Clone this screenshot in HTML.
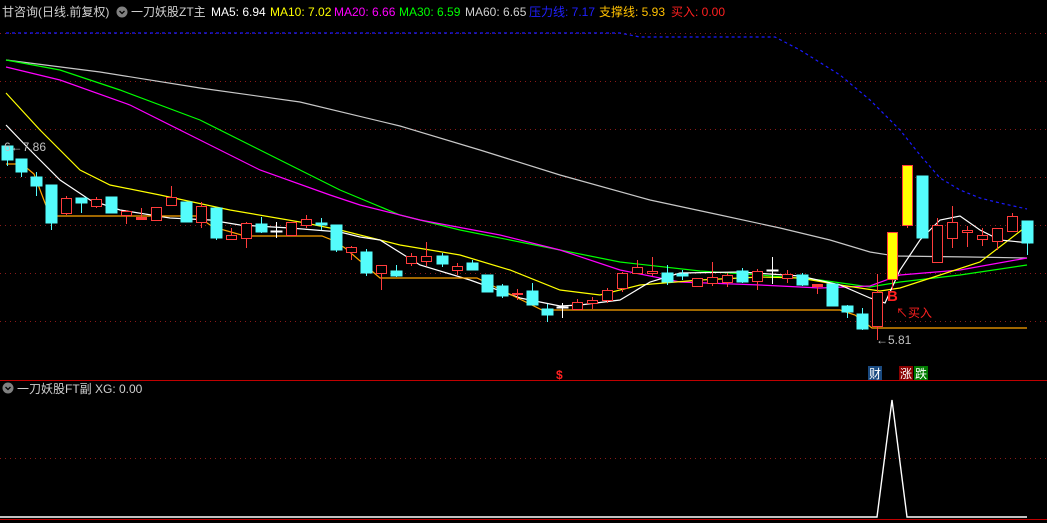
<!DOCTYPE html>
<html><head><meta charset="utf-8"><style>
html,body{margin:0;padding:0;background:#000;width:1047px;height:523px;overflow:hidden}
svg{display:block}
text{font-family:"Liberation Sans","Noto Sans CJK SC",sans-serif;font-size:12px}
</style></head><body>
<svg width="1047" height="523" viewBox="0 0 1047 523" xmlns="http://www.w3.org/2000/svg">
<rect width="1047" height="523" fill="#000"/>
<g stroke="#8a1a1a" stroke-width="1" stroke-dasharray="1,4">
<line x1="0" y1="33.5" x2="1047" y2="33.5"/><line x1="0" y1="81.5" x2="1047" y2="81.5"/>
<line x1="0" y1="129.5" x2="1047" y2="129.5"/><line x1="0" y1="177.5" x2="1047" y2="177.5"/>
<line x1="0" y1="225.5" x2="1047" y2="225.5"/><line x1="0" y1="273.5" x2="1047" y2="273.5"/>
<line x1="0" y1="321.5" x2="1047" y2="321.5"/><line x1="0" y1="458.5" x2="1047" y2="458.5"/>
</g>
<line x1="0" y1="380.5" x2="1047" y2="380.5" stroke="#c00000"/>
<line x1="0" y1="519.5" x2="1047" y2="519.5" stroke="#c00000"/>
<!-- resistance -->
<polyline fill="none" stroke="#1a1aff" stroke-width="1.2" stroke-dasharray="3,3" points="6,33 620,33 640,37 775,37 800,50 840,75 870,100 900,130 920,155 940,178 960,190 980,198 1000,203 1027,209"/>
<!-- MA60 -->
<polyline fill="none" stroke="#c8c8c8" stroke-width="1.2" points="6,60 100,72 200,88 300,102 400,126 480,150 560,175 650,200 720,215 780,228 830,240 870,252 895,256 970,257 1027,258"/>
<!-- MA30 -->
<polyline fill="none" stroke="#00ff00" stroke-width="1.2" points="6,60 60,70 120,90 200,120 280,160 340,190 400,215 460,230 560,250 620,262 700,271 760,275 820,280 870,287 900,282 960,275 1027,265"/>
<!-- MA20 -->
<polyline fill="none" stroke="#ff00ff" stroke-width="1.2" points="6,67 60,80 130,105 200,140 260,170 330,195 360,205 420,220 500,235 560,250 620,270 680,282 760,285 820,288 870,286 900,275 960,270 1027,258"/>
<!-- MA10 -->
<polyline fill="none" stroke="#ffff00" stroke-width="1.2" points="6,93 40,130 80,170 110,185 160,195 230,210 300,222 340,230 400,245 460,255 510,270 560,290 600,295 640,285 700,280 760,277 800,278 840,285 880,291 900,288 940,275 980,262 1027,226"/>
<!-- MA5 -->
<polyline fill="none" stroke="#ffffff" stroke-width="1.2" points="6,125 30,150 60,180 90,200 120,210 170,218 210,220 240,225 290,228 340,232 360,237 380,240 420,265 470,280 520,298 560,306 580,305 620,300 650,282 680,273 740,272 800,276 840,285 870,298 885,303 900,270 920,240 940,220 960,216 980,230 1000,240 1030,243"/>
<!-- support -->
<polyline fill="none" stroke="#ffa500" stroke-width="1.2" points="6,164 22,164 34,174 50,216 197,216 213,227 245,236 322,236 332,240 345,248 380,278 477,278 542,310 840,310 855,315 872,328 1027,328"/>
<g stroke-width="1">
<g stroke="#54fcfc" fill="#54fcfc">
<line x1="7.5" y1="146" x2="7.5" y2="166"/><rect x="2" y="146" width="11" height="14"/>
<line x1="21.5" y1="159" x2="21.5" y2="177"/><rect x="16" y="159" width="11" height="13"/>
<line x1="36.5" y1="172" x2="36.5" y2="196"/><rect x="31" y="177" width="11" height="9"/>
<line x1="51.5" y1="185" x2="51.5" y2="230"/><rect x="46" y="185" width="11" height="38"/>
<line x1="81.5" y1="198" x2="81.5" y2="213"/><rect x="76" y="198" width="11" height="5"/>
<rect x="106" y="197" width="11" height="16"/>
<rect x="181" y="202" width="11" height="20"/>
<line x1="216.5" y1="208" x2="216.5" y2="240"/><rect x="211" y="208" width="11" height="30"/>
<line x1="261.5" y1="217" x2="261.5" y2="233"/><rect x="256" y="224" width="11" height="8"/>
<line x1="321.5" y1="218" x2="321.5" y2="230"/><rect x="316" y="223" width="11" height="2"/>
<line x1="336.5" y1="225" x2="336.5" y2="252"/><rect x="331" y="225" width="11" height="25"/>
<line x1="366.5" y1="249" x2="366.5" y2="276"/><rect x="361" y="252" width="11" height="21"/>
<line x1="396.5" y1="265" x2="396.5" y2="277"/><rect x="391" y="271" width="11" height="5"/>
<line x1="442.5" y1="253" x2="442.5" y2="267"/><rect x="437" y="256" width="11" height="8"/>
<line x1="472.5" y1="260" x2="472.5" y2="270"/><rect x="467" y="263" width="11" height="7"/>
<rect x="482" y="275" width="11" height="17"/>
<line x1="502.5" y1="284" x2="502.5" y2="298"/><rect x="497" y="286" width="11" height="10"/>
<line x1="532.5" y1="283" x2="532.5" y2="305"/><rect x="527" y="291" width="11" height="14"/>
<line x1="547.5" y1="304" x2="547.5" y2="322"/><rect x="542" y="309" width="11" height="6"/>
<line x1="667.5" y1="265" x2="667.5" y2="285"/><rect x="662" y="273" width="11" height="9"/>
<line x1="682.5" y1="270" x2="682.5" y2="280"/><rect x="677" y="274" width="11" height="2"/>
<line x1="742.5" y1="268" x2="742.5" y2="283"/><rect x="737" y="271" width="11" height="11"/>
<line x1="802.5" y1="273" x2="802.5" y2="286"/><rect x="797" y="275" width="11" height="10"/>
<rect x="827" y="284" width="11" height="22"/>
<line x1="847.5" y1="305" x2="847.5" y2="318"/><rect x="842" y="306" width="11" height="6"/>
<line x1="862.5" y1="308" x2="862.5" y2="330"/><rect x="857" y="314" width="11" height="15"/>
<rect x="917" y="176" width="11" height="62"/>
<line x1="1027.5" y1="221" x2="1027.5" y2="255"/><rect x="1022" y="221" width="11" height="22"/>
</g>
<g stroke="#fff" fill="#fff">
<line x1="276.5" y1="222" x2="276.5" y2="238"/><rect x="271" y="231" width="11" height="1"/>
<line x1="562.5" y1="303" x2="562.5" y2="318"/><rect x="557" y="307" width="11" height="1"/>
<line x1="772.5" y1="257" x2="772.5" y2="284"/><rect x="767" y="270" width="11" height="1"/>
</g>
<g stroke="#ff3c3c" fill="#000">
<line x1="66.5" y1="196" x2="66.5" y2="215"/><rect x="61.5" y="198.5" width="10" height="15"/>
<line x1="96.5" y1="197" x2="96.5" y2="208"/><rect x="91.5" y="199.5" width="10" height="7"/>
<line x1="126.5" y1="210" x2="126.5" y2="224"/><rect x="121.5" y="211.5" width="10" height="4"/>
<line x1="141.5" y1="208" x2="141.5" y2="220"/><rect x="136.5" y="217.5" width="10" height="2" fill="#ff3c3c"/>
<rect x="151.5" y="207.5" width="10" height="13"/>
<line x1="171.5" y1="186" x2="171.5" y2="205"/><rect x="166.5" y="197.5" width="10" height="8"/>
<line x1="201.5" y1="202" x2="201.5" y2="228"/><rect x="196.5" y="206.5" width="10" height="16"/>
<line x1="231.5" y1="228" x2="231.5" y2="240"/><rect x="226.5" y="235.5" width="10" height="4"/>
<line x1="246.5" y1="222" x2="246.5" y2="248"/><rect x="241.5" y="223.5" width="10" height="15"/>
<rect x="286.5" y="222.5" width="10" height="13"/>
<line x1="306.5" y1="215" x2="306.5" y2="228"/><rect x="301.5" y="219.5" width="10" height="6"/>
<line x1="351.5" y1="246" x2="351.5" y2="260"/><rect x="346.5" y="247.5" width="10" height="5"/>
<line x1="381.5" y1="265" x2="381.5" y2="290"/><rect x="376.5" y="265.5" width="10" height="8"/>
<line x1="411.5" y1="253" x2="411.5" y2="266"/><rect x="406.5" y="256.5" width="10" height="7"/>
<line x1="426.5" y1="242" x2="426.5" y2="266"/><rect x="421.5" y="256.5" width="10" height="5"/>
<line x1="457.5" y1="263" x2="457.5" y2="275"/><rect x="452.5" y="266.5" width="10" height="4"/>
<line x1="517.5" y1="289" x2="517.5" y2="300"/><rect x="512.5" y="293.5" width="10" height="1" fill="#ff3c3c"/>
<line x1="577.5" y1="299" x2="577.5" y2="309"/><rect x="572.5" y="302.5" width="10" height="7"/>
<line x1="592.5" y1="297" x2="592.5" y2="309"/><rect x="587.5" y="300.5" width="10" height="3"/>
<line x1="607.5" y1="288" x2="607.5" y2="303"/><rect x="602.5" y="290.5" width="10" height="10"/>
<line x1="622.5" y1="272" x2="622.5" y2="292"/><rect x="617.5" y="273.5" width="10" height="15"/>
<line x1="637.5" y1="260" x2="637.5" y2="274"/><rect x="632.5" y="267.5" width="10" height="6"/>
<line x1="652.5" y1="257" x2="652.5" y2="276"/><rect x="647.5" y="271.5" width="10" height="2"/>
<rect x="692.5" y="278.5" width="10" height="8"/>
<line x1="712.5" y1="262" x2="712.5" y2="286"/><rect x="707.5" y="277.5" width="10" height="6"/>
<line x1="727.5" y1="273" x2="727.5" y2="287"/><rect x="722.5" y="275.5" width="10" height="7"/>
<line x1="757.5" y1="269" x2="757.5" y2="290"/><rect x="752.5" y="271.5" width="10" height="10"/>
<line x1="787.5" y1="270" x2="787.5" y2="283"/><rect x="782.5" y="274.5" width="10" height="4"/>
<line x1="817.5" y1="284" x2="817.5" y2="294"/><rect x="812.5" y="284.5" width="10" height="2" fill="#ff3c3c"/>
<line x1="877.5" y1="274" x2="877.5" y2="340"/><rect x="872.5" y="292.5" width="10" height="34"/>
<line x1="937.5" y1="218" x2="937.5" y2="262"/><rect x="932.5" y="225.5" width="10" height="37"/>
<line x1="952.5" y1="206" x2="952.5" y2="248"/><rect x="947.5" y="222.5" width="10" height="16"/>
<line x1="967.5" y1="226" x2="967.5" y2="247"/><rect x="962.5" y="230.5" width="10" height="2"/>
<line x1="982.5" y1="228" x2="982.5" y2="246"/><rect x="977.5" y="235.5" width="10" height="4"/>
<line x1="997.5" y1="228" x2="997.5" y2="250"/><rect x="992.5" y="228.5" width="10" height="13"/>
<line x1="1012.5" y1="213" x2="1012.5" y2="231"/><rect x="1007.5" y="216.5" width="10" height="15"/>
</g>
<g stroke="#ff3c3c" fill="#ffff00">
<line x1="892.5" y1="279" x2="892.5" y2="290"/><rect x="887.5" y="232.5" width="10" height="47"/>
<line x1="907.5" y1="225" x2="907.5" y2="228"/><rect x="902.5" y="165.5" width="10" height="60"/>
</g>
</g>
<!-- annotations -->
<text x="4" y="151" fill="#c0c0c0">6←7.86</text>
<text x="876" y="344" fill="#c0c0c0">←5.81</text>
<text x="887" y="301" fill="#ff2020" font-weight="bold" style="font-size:15px">B</text>
<text x="896" y="317" fill="#ff2020">↖买入</text>
<text x="556" y="379" fill="#ff2020" font-weight="bold">$</text>
<rect x="868" y="366" width="14" height="14" fill="#1a4a80"/><text x="869" y="378" fill="#fff">财</text>
<rect x="899" y="366" width="14" height="14" fill="#8a0000"/><text x="900" y="378" fill="#fff">涨</text>
<rect x="914" y="366" width="14" height="14" fill="#007a00"/><text x="915" y="378" fill="#fff">跌</text>
<!-- bottom panel -->
<polyline fill="none" stroke="#fff" stroke-width="1.4" points="0,517 877,517 892,400 907,517 1027,517"/>
<!-- header -->
<text x="2" y="16" fill="#d0d0d0">甘咨询(日线.前复权)</text>
<circle cx="122" cy="12" r="5.5" fill="#808080"/><path d="M119.5 11 L122 13.5 L124.5 11" stroke="#000" stroke-width="1.3" fill="none"/>
<text x="131" y="16" fill="#d0d0d0">一刀妖股ZT主</text>
<text x="211" y="16" fill="#ffffff">MA5: 6.94</text>
<text x="270" y="16" fill="#ffff00">MA10: 7.02</text>
<text x="334" y="16" fill="#ff00ff">MA20: 6.66</text>
<text x="399" y="16" fill="#00ff00">MA30: 6.59</text>
<text x="465" y="16" fill="#d0d0d0">MA60: 6.65</text>
<text x="529" y="16" fill="#2020ff">压力线: 7.17</text>
<text x="599" y="16" fill="#ffc000">支撑线: 5.93</text>
<text x="671" y="16" fill="#ff2020">买入: 0.00</text>
<circle cx="8" cy="388" r="5.5" fill="#808080"/><path d="M5.5 387 L8 389.5 L10.5 387" stroke="#000" stroke-width="1.3" fill="none"/>
<text x="17" y="393" fill="#d0d0d0">一刀妖股FT副  XG: 0.00</text>
</svg>
</body></html>
